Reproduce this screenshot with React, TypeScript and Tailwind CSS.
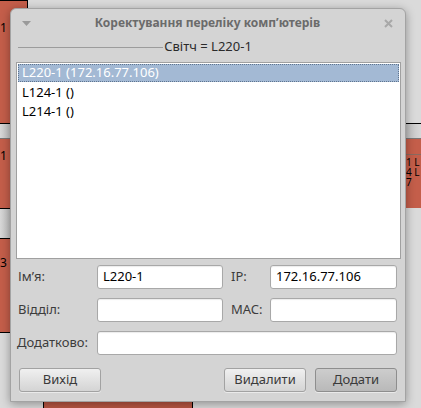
import React from "react";

const font = { fontFamily: '"Noto Sans", "Open Sans", sans-serif' };

function Input({ value = "" }: { value?: string }) {
  return (
    <div className="h-[24px] rounded-[3px] border border-[#a8a8a8] bg-white flex items-center px-[5px] text-[13px] text-black shadow-[inset_0_1px_1px_rgba(0,0,0,0.08)]">
      {value}
    </div>
  );
}

function Button({ label, dark = false, w = "w-[82px]" }: { label: string; dark?: boolean; w?: string }) {
  return (
    <div
      className={`${w} h-[24px] rounded-[3px] border flex items-center justify-center text-[13px] text-[#3a3a3a] ${
        dark
          ? "border-[#8e8e8e] bg-gradient-to-b from-[#cdcdcd] to-[#b9b9b9]"
          : "border-[#a2a2a2] bg-gradient-to-b from-[#f0f0f0] to-[#d4d4d4]"
      } shadow-[0_1px_0_rgba(255,255,255,0.5)]`}
    >
      {label}
    </div>
  );
}

export default function App() {
  return (
    <div className="relative w-[421px] h-[408px] overflow-hidden bg-[#dadada]" style={font}>
      {/* background desktop windows */}
      <div className="absolute left-0 top-0 w-[28px] h-[123px] bg-[#c45e4a] border-t border-r border-black text-[12px] leading-none text-black">
        <span className="absolute left-0 top-[21px]">1</span>
      </div>
      <div className="absolute left-0 top-[123px] w-[12px] h-[15px] bg-gradient-to-r from-[#d8d8d8] to-[#bdbdbd] border-t border-black" />
      <div className="absolute left-0 top-[138px] w-[12px] h-[70px] bg-[#c45e4a] border-t border-[#777] text-[12px] leading-none text-black">
        <span className="absolute left-0 top-[11px]">1</span>
      </div>
      <div className="absolute left-0 top-[208px] w-[12px] h-[30px] bg-gradient-to-r from-[#d8d8d8] to-[#bdbdbd] border-t border-black" />
      <div className="absolute left-0 top-[238px] w-[12px] h-[95px] bg-[#c45e4a] border-t border-b border-black text-[12px] leading-none text-black">
        <span className="absolute left-0 top-[18px]">3</span>
      </div>
      <div className="absolute left-[405px] top-[123px] w-[16px] h-[15px] bg-gradient-to-r from-[#bdbdbd] to-[#d8d8d8] border-t border-black" />
      <div className="absolute left-[405px] top-[138px] w-[16px] h-[70px] bg-[#c45e4a] border-t border-[#777] text-black">
        <div className="absolute left-0 right-0 top-[15px] border-t border-[#8a6a60]" />
        <div className="absolute left-[1px] top-[18px] text-[10px] leading-[10px] whitespace-pre">
          {"1 L\n4 L\n7"}
        </div>
      </div>
      <div className="absolute left-[43px] top-[400px] w-[150px] h-[10px] bg-[#b85542] border-l border-r border-black" />

      {/* dialog */}
      <div className="absolute left-[10px] top-[8px] w-[396px] h-[394px] rounded-t-[6px] border border-[#a3a3a3] bg-[#d4d4d4] shadow-[0_2px_10px_rgba(0,0,0,0.35)] flex flex-col">
        <div className="h-[28px] flex items-center px-[10px] relative">
          <svg width="9" height="5" viewBox="0 0 9 5" className="ml-[1px]">
            <path d="M0 0 L9 0 L4.5 5 Z" fill="#9a9a9a" />
          </svg>
          <div className="flex-1 text-center text-[12px] font-bold text-[#6b6b6b]">
            Коректування переліку комп’ютерів
          </div>
          <svg width="9" height="9" viewBox="0 0 9 9" className="mr-[2px]">
            <path d="M1 1 L8 8 M8 1 L1 8" stroke="#a8a8a8" strokeWidth="2" />
          </svg>
        </div>
        <div className="h-[20px] flex items-center pl-[7px] pr-[7px]">
          <div className="flex-1 border-t border-[#9c9c9c]" />
          <div className="px-[1px] text-[13px] text-[#2a2a2a]">Світч = L220-1</div>
          <div className="flex-1" />
        </div>
        <div className="mt-[5px] ml-[5px] w-[385px] h-[197px] border border-[#a0a0a0] bg-white p-[1px] text-[13px]">
          <div className="h-[18px] mb-[1px] bg-[#a3b9d4] border border-dotted border-[#5f7590] flex items-center pl-[3px] text-white">
            L220-1 (172.16.77.106)
          </div>
          <div className="h-[19px] flex items-center pl-[4px] text-black">L124-1 ()</div>
          <div className="h-[19px] flex items-center pl-[4px] text-black">L214-1 ()</div>
        </div>
        <div className="mt-[6px] ml-[7px] grid grid-cols-[79px_126px_8px_39px_127px] gap-y-[9px] items-center text-[13px] text-[#3c3c3c]">
          <div>Ім’я:</div>
          <Input value="L220-1" />
          <div />
          <div>IP:</div>
          <Input value="172.16.77.106" />
          <div>Відділ:</div>
          <Input />
          <div />
          <div>MAC:</div>
          <Input />
          <div className="-ml-[1px]">Додатково:</div>
          <div className="col-span-4">
            <Input />
          </div>
        </div>
        <div className="mt-[13px] ml-[8px] mr-[8px] flex items-center">
          <Button label="Вихід" />
          <div className="flex-1" />
          <Button label="Видалити" />
          <div className="w-[9px]" />
          <Button label="Додати" dark />
        </div>
      </div>
    </div>
  );
}
